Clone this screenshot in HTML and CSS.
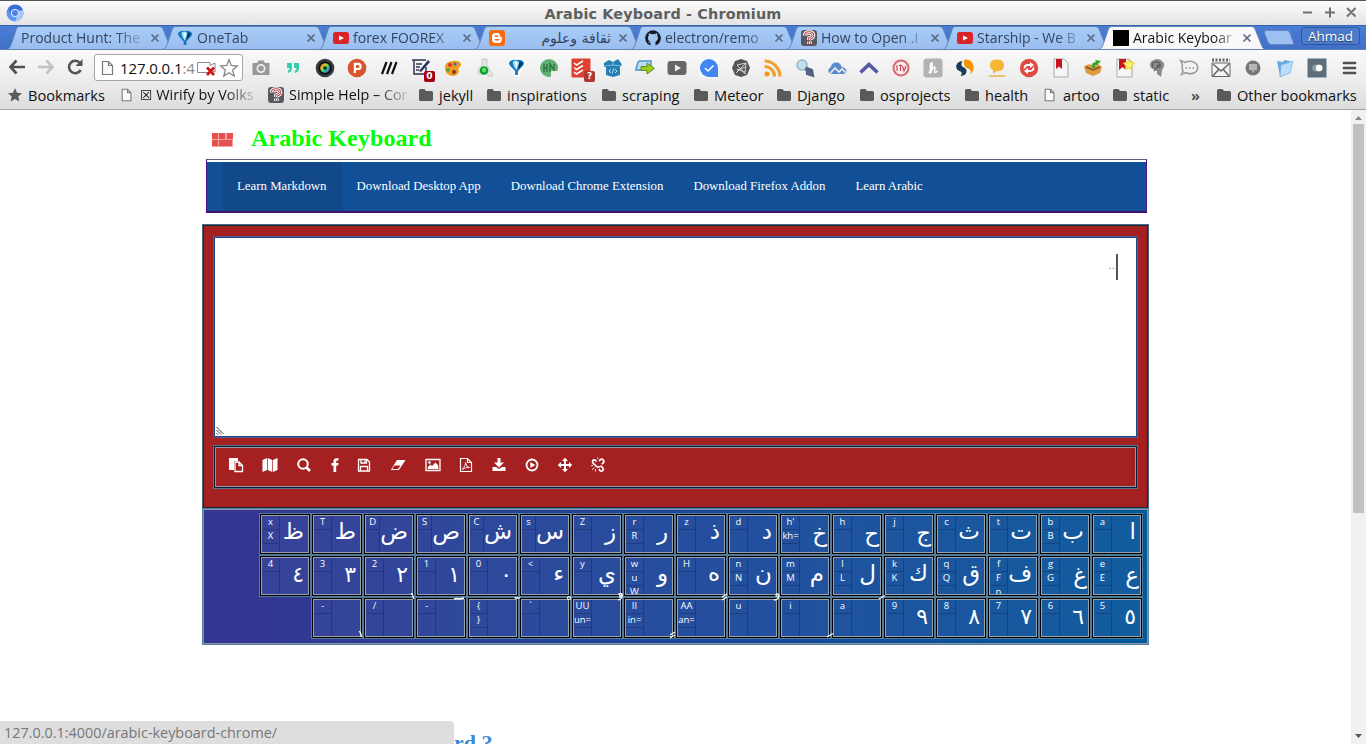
FILE: index.html
```html
<!DOCTYPE html>
<html lang="en">
<head>
<meta charset="utf-8">
<title>Arabic Keyboard</title>
<link rel="stylesheet" href="styles.css">
</head>
<body>
<svg width="0" height="0" class="defs">
  <defs>
    <linearGradient id="tabfill" x1="0" y1="0" x2="0" y2="1"><stop offset="0" stop-color="#a8cdf8"/><stop offset="1" stop-color="#9abdf0"/></linearGradient>
    <linearGradient id="hue" x1="0" y1="0" x2="1" y2="1"><stop offset="0" stop-color="#f33"/><stop offset=".35" stop-color="#cc2"/><stop offset=".6" stop-color="#2c8"/><stop offset="1" stop-color="#83f"/></linearGradient>
    <symbol id="tab" viewBox="0 0 170 25"><path d="M0 24.5C4 24 4.500 21 6 17L10 5C11 2 12 1.500 15 1.500H152C156 1.500 156.500 3 157.500 5L163 19C164.500 23 165 24 169 24.500Z" stroke="#6484b8" stroke-width="1"/></symbol>
    <symbol id="folder" viewBox="0 0 14 14"><path d="M0 2.500Q0 1 1.500 1H5.500L7 3H12.500Q14 3 14 4.500V11.500Q14 13 12.500 13H1.500Q0 13 0 11.500Z" fill="#5a5a5a"/></symbol>
    <symbol id="page" viewBox="0 0 14 16"><path d="M1.500 1.500H7.500L11.500 5.500V14.500H1.500ZM7.500 1.500V5.500H11.500" fill="#fbfbfb" stroke="#777" stroke-width="1.200"/></symbol>
    <symbol id="x" viewBox="0 0 10 10"><path d="M1.500 1.500L8.500 8.500M8.500 1.500L1.500 8.500" stroke="#5d6b80" stroke-width="1.700"/></symbol>
    <symbol id="yt" viewBox="0 0 16 16"><rect y="2" width="16" height="12" rx="2.500" fill="#d9252a"/><path d="M6 5.500L11 8L6 10.500Z" fill="#fff"/></symbol>
    <symbol id="helpicon" viewBox="0 0 16 16"><rect width="16" height="16" rx="3" fill="#555960"/><path d="M4 5.500Q4 2.500 8 2.500Q12 2.500 12 5.500Q12 7.500 8.500 8.500V10M8.500 11.500V14" fill="none" stroke="#fff" stroke-width="4.600"/><path d="M4 5.500Q4 2.500 8 2.500Q12 2.500 12 5.500Q12 7.500 8.500 8.500V10M8.500 11.500V14" fill="none" stroke="#b33a44" stroke-width="2.600"/><path d="M4 5.500Q4 2.500 8 2.500Q12 2.500 12 5.500Q12 7.500 8.500 8.500V10M8.500 11.500V14" fill="none" stroke="#fff" stroke-width=".9"/></symbol>
    <symbol id="balloon" viewBox="0 0 18 18"><path d="M1 4Q3 0 9 1Q15 0 17 4Q17 7 13 10L10.500 13V17H7.500V13L5 10Q1 7 1 4Z" fill="#1677c0"/><path d="M5 3Q9 0 12 4L9 12Q5 7 5 3Z" fill="#8ee4fa"/><path d="M7 3L9 11L10 3Z" fill="#fff"/><path d="M12 3Q16 2 15 6L10.500 11Z" fill="#07355e"/></symbol>
  </defs>
</svg>

<header class="titlebar">
  <svg class="logo" viewBox="0 0 18 18"><circle cx="9" cy="9" r="8.500" fill="#5f95ee"/><path d="M9 9L17 6A8.500 8.500 0 0 1 9 17.500L12 10Z" fill="#a9c8fa"/><path d="M2 4.500A8.500 8.500 0 0 1 17 6H9L5 10Z" fill="#3b6fd6"/><circle cx="9" cy="9" r="4" fill="#dce9ff"/><circle cx="9" cy="9" r="3" fill="#4b82e6"/></svg>
  <h1>Arabic Keyboard - Chromium</h1>
  <svg class="winbtns" viewBox="0 0 56 14"><path d="M1 6.500H10M23 6.500H33M28 1.500V11.500M45 2L53.500 10.500M53.500 2L45 10.500" stroke="#707070" stroke-width="2" fill="none"/></svg>
</header>

<div class="tabstrip">
  <div class="tab"><svg class="shape"><use href="#tab"/></svg><span class="label">Product Hunt: The</span><svg class="close"><use href="#x"/></svg></div>
  <div class="tab"><svg class="shape"><use href="#tab"/></svg><svg class="fav"><use href="#balloon"/></svg><span class="label">OneTab</span><svg class="close"><use href="#x"/></svg></div>
  <div class="tab"><svg class="shape"><use href="#tab"/></svg><svg class="fav"><use href="#yt"/></svg><span class="label">forex FOOREX</span><svg class="close"><use href="#x"/></svg></div>
  <div class="tab"><svg class="shape"><use href="#tab"/></svg><svg class="fav" viewBox="0 0 16 16"><rect width="16" height="16" rx="3" fill="#fb6a0c"/><path d="M6.500 3H8.500Q11.200 3 11.200 6.500Q13 6.700 13 8.500Q13 13 9 13H6.500Q3 13 3 9V6.500Q3 3 6.500 3Z" fill="#fff"/><path d="M6.300 6.200H8.500M6.300 9.700H9.700" stroke="#fb6a0c" stroke-width="1.500" stroke-linecap="round"/></svg><span class="label rtl">ثقافة وعلوم</span><svg class="close"><use href="#x"/></svg></div>
  <div class="tab"><svg class="shape"><use href="#tab"/></svg><svg class="fav" viewBox="0 0 16 16"><path d="M8 .3A7.800 7.800 0 0 0 5.500 15.500V12.800Q3.500 13 2.800 11.300Q4.500 12.300 5.500 11.500Q3 11 3 8Q3 6.500 3.800 5.500Q3.500 4 4 3.200Q5 3.300 6 4.200Q8 3.700 10 4.200Q11 3.300 12 3.200Q12.500 4 12.200 5.500Q13 6.500 13 8Q13 11 10.500 11.700V15.500A7.800 7.800 0 0 0 8 .3Z" fill="#161b24"/></svg><span class="label">electron/remo</span><svg class="close"><use href="#x"/></svg></div>
  <div class="tab"><svg class="shape"><use href="#tab"/></svg><svg class="fav"><use href="#helpicon"/></svg><span class="label">How to Open .I</span><svg class="close"><use href="#x"/></svg></div>
  <div class="tab"><svg class="shape"><use href="#tab"/></svg><svg class="fav"><use href="#yt"/></svg><span class="label">Starship - We B</span><svg class="close"><use href="#x"/></svg></div>
  <div class="tab active"><svg class="shape"><use href="#tab"/></svg><svg class="fav" viewBox="0 0 16 16"><path d="M0 0H16V16H0Z"/></svg><span class="label">Arabic Keyboar</span><svg class="close"><use href="#x"/></svg></div>
  <svg class="newtab" viewBox="0 0 34 18"><path d="M4.500 1.500H25Q27 1.500 28 4L31.500 14Q32 15.500 30 15.500H10Q7 15.500 6 13L2.500 4Q2 1.500 4.500 1.500Z" fill="#9dbff1" stroke="#6585bd"/></svg>
  <span class="user">Ahmad</span>
</div>

<div class="toolbar">
  <div class="navbtns">
    <svg viewBox="0 0 20 20"><path d="M18 10H4M9.500 3.500L3.500 10L9.500 16.500" fill="none" stroke="#505050" stroke-width="2.600"/></svg>
    <svg viewBox="0 0 20 20"><path d="M2 10H16M10.500 3.500L16.500 10L10.500 16.500" fill="none" stroke="#c2c2c2" stroke-width="2.600"/></svg>
    <svg viewBox="0 0 20 20"><path d="M15 6A6.200 6.200 0 1 0 15.700 13" fill="none" stroke="#555" stroke-width="2.600"/><path d="M17.500 2V9H10.500Z" fill="#555"/></svg>
  </div>
  <div class="omnibox">
    <svg class="doc"><use href="#page"/></svg>
    <span class="url">127.0.0.1<i>:4</i></span>
    <svg class="blocked" viewBox="0 0 20 18"><path d="M.5 2.500H13V5.500L18 3V12L13 9.500V12.500H.5Z" fill="#fff" stroke="#888"/><path d="M10 7.500L17 15M17 7.500L10 15" stroke="#d4141c" stroke-width="2.600"/></svg>
    <svg class="star" viewBox="0 0 20 20"><path d="M10 1.800L12.300 7.500L18.300 8L13.700 12L15.200 18L10 14.700L4.800 18L6.300 12L1.700 8L7.700 7.500Z" fill="#fff" stroke="#888" stroke-width="1.300"/></svg>
  </div>
  <div class="extensions">
    <svg viewBox="0 0 20 20"><path d="M2 5H6L7.500 2.500H12.500L14 5H18.500V17H1.500V5Z" fill="#999"/><circle cx="10" cy="10.500" r="4.500" fill="#eee"/><circle cx="10" cy="10.500" r="2.800" fill="#999"/></svg>
    <svg viewBox="0 0 20 20"><path d="M4 5H9V10Q9 14 5 15V12.500Q6.500 12 6.500 10H4ZM11 5H16V10Q16 14 12 15V12.500Q13.500 12 13.500 10H11Z" fill="#31cfb0"/></svg>
    <svg viewBox="0 0 20 20"><circle cx="10" cy="10" r="9.300" fill="#3a3b40"/><circle cx="10" cy="10" r="6.800" fill="#111"/><circle cx="10" cy="10" r="4.800" fill="url(#hue)"/><circle cx="10" cy="10" r="1.800" fill="#123"/></svg>
    <svg viewBox="0 0 20 20"><circle cx="10" cy="10" r="9.300" fill="#da552f"/><path d="M7.900 15V5.800H11A2.600 2.600 0 0 1 11 11H8" fill="none" stroke="#fff" stroke-width="2.200"/></svg>
    <svg viewBox="0 0 20 20"><path d="M3 16L7.500 4M8 16L12.500 4M13 16L17.500 4" stroke="#111" stroke-width="2.200"/></svg>
    <span class="ext"><svg viewBox="0 0 20 20"><path d="M1 2H15M3 2V16H15V9M5 6H11M5 9H9M5 12H8" fill="none" stroke="#33334e" stroke-width="1.500"/><path d="M8 13L17 2L19 4L10 14Z" fill="#263064"/></svg><b class="badge red">0</b></span>
    <svg viewBox="0 0 20 20"><path d="M2 11Q1 4 9 3Q19 2 18 8Q14 9 16 13Q15 18 9 18Q3 17 2 11Z" fill="#ee9c1e"/><circle cx="7" cy="7" r="2" fill="#d33"/><circle cx="12" cy="6" r="1.600" fill="#36c"/><circle cx="5" cy="12" r="1.800" fill="#3a5"/><circle cx="11" cy="14" r="2" fill="#832"/></svg>
    <svg viewBox="0 0 20 20"><path d="M7 1H12V7L18 18H13L11 14Q8 18 4 16Q1 12 7 7Z" fill="#e1e8e1" stroke="#b8bfb8" stroke-width=".7"/><circle cx="9" cy="12.500" r="4.300" fill="#179b35"/><circle cx="9" cy="12" r="2.200" fill="#5be35a"/></svg>
    <svg viewBox="0 0 20 20"><path d="M0 4Q3 0 10 1Q17 0 20 4L13 15V19H7V15Z" fill="#fff"/><use href="#balloon" x="1" y="1" width="17" height="17"/></svg>
    <svg viewBox="0 0 20 20"><circle cx="10" cy="10" r="9" fill="#5fb073"/><path d="M5 6V14M8 6V14M5 10H8M11 14V6L15 12V6" stroke="#2e7442" stroke-width="1.300" fill="none"/><path d="M12 13H20V20H12Z" fill="#efefef"/></svg>
    <span class="ext"><svg viewBox="0 0 20 20"><rect x=".5" y=".5" width="19" height="19" rx="1" fill="#e04032"/><path d="M3 5L5.500 7L12 3M3 9.500L5.500 11.500L12 7.500M3 14L5.500 16L12 12" fill="none" stroke="#fff" stroke-width="1.500"/></svg><b class="badge dim">?</b></span>
    <svg viewBox="0 0 20 20"><path d="M1 5L6 2L10 4L15 1L18 5L19 8H17V17L10 19L3 17V9H1Z" fill="#2580b5"/><path d="M1 8L10 7L19 8M10 4V8" stroke="#8cc6e8" fill="none" stroke-width=".8"/><path d="M8 11L6 13L8 15M12 11L14 13L12 15M10.800 10.500L9.300 15.500" stroke="#bfe2f5" fill="none" stroke-width=".9"/></svg>
    <svg viewBox="0 0 20 20"><path d="M4 3H16V9H8V12H1Q2 5 4 3Z" fill="#b9dcf4" stroke="#4c93cc" stroke-width="1.500"/><path d="M6 8.500H12V5L19.500 10.500L12 16V12.500H6Z" fill="#98cd1a" stroke="#658b1c"/></svg>
    <svg viewBox="0 0 20 20"><rect x=".5" y="3" width="19" height="14" rx="3" fill="#666"/><path d="M8 6.500L14 10L8 13.500Z" fill="#eee"/></svg>
    <svg viewBox="0 0 20 20"><path d="M.5 .5H19.500V19.500H.5Z" fill="#f7faff"/><path d="M10 1A9 9 0 1 0 10 19H19V10A9 9 0 0 0 10 1Z" fill="#4285f4"/><path d="M6 10L9 13L14.500 7.500" fill="none" stroke="#fff" stroke-width="1.500"/></svg>
    <svg viewBox="0 0 20 20"><path d="M4 3L10 1L16 3L19 10L16 17L10 19L4 17L1 10Z" fill="#555"/><path d="M5 15L15 5L14 16L6 7L15 5M6 11L14 14M6 13L14 9" fill="none" stroke="#ddd" stroke-width=".9"/></svg>
    <svg viewBox="0 0 20 20"><circle cx="4" cy="16" r="2.500" fill="#f2961d"/><path d="M1.500 8.500A10 10 0 0 1 11.500 18.500M1.500 3A15.500 15.500 0 0 1 17 18.500" fill="none" stroke="#f0a030" stroke-width="3.200"/></svg>
    <svg viewBox="0 0 20 20"><circle cx="7" cy="7" r="5" fill="#bfe0f4" stroke="#9db5c5" stroke-width="1.500"/><path d="M10 11L18 18M12 10L17 12L18 18L12 16Z" stroke="#526280" stroke-width="2.200" fill="#526280"/></svg>
    <svg viewBox="0 0 20 20"><path d="M3.500 16A3.500 3.500 0 0 1 3.500 9.500Q5 4 10 4.500Q14 5 14.500 9Q19 9.500 19.500 13Q19 16 16 16Z" fill="#5a8bd0"/><path d="M3 15.500L8 10L12 14L15 11L18.500 14.500" stroke="#eee" stroke-width="1.600" fill="none"/></svg>
    <svg viewBox="0 0 20 20"><path d="M1.500 14.500L10 6.500L18.500 14.500" fill="none" stroke="#5358a5" stroke-width="3.600"/></svg>
    <svg viewBox="0 0 20 20"><path d="M.5 .5H19.500V19.500H.5Z" fill="#fbecec"/><circle cx="10" cy="10" r="7.500" fill="none" stroke="#cc6c74" stroke-width="2"/><path d="M6 7V13M8 7.500H11M9.500 6.500V13M11.500 8L13 13L15 8" fill="none" stroke="#d04050" stroke-width="1.100"/></svg>
    <svg viewBox="0 0 20 20"><rect x=".5" y=".5" width="19" height="19" rx="3" fill="#b2b2b2"/><path d="M6 15Q10 8 9 5Q7 4 7.500 9V15.500Q9 9 11.500 9Q12.500 9 11.500 13Q11.500 16 14.500 13" fill="none" stroke="#fff" stroke-width="1.500"/></svg>
    <svg viewBox="0 0 20 20"><path d="M7.500 3Q2 3.500 1.200 8Q.8 12 5.500 13.500Q8 15 5.500 18Q11.500 17.500 11.500 13Q11.500 10.500 8 9Q5 7 7.500 3Z" fill="#193b5b"/><path d="M9.500 1.500Q16 1 18 6Q20 12 15 17Q17 13 14 11Q9 9 9 6Q8.500 3.500 9.500 1.500Z" fill="#f99500"/></svg>
    <svg viewBox="0 0 20 20"><path d="M3 7Q3 1.500 10 1.500Q17 1.500 17 7.500Q17 13 10.500 13L6 15.500V12Q3 11 3 7Z" fill="#f4b734"/><path d="M2 18H18" stroke="#e7b33d" stroke-width="1.500"/></svg>
    <svg viewBox="0 0 20 20"><circle cx="10" cy="10" r="9.200" fill="#dd4b43"/><path d="M5.500 10.500Q5.500 7 9 7H12M14.500 9.500Q14.500 13 11 13H8" fill="none" stroke="#fff" stroke-width="1.800"/><path d="M11 4L15 7L11 10ZM9 16L5 13L9 10Z" fill="#fff"/></svg>
    <svg viewBox="0 0 20 20"><path d="M3 1H13L17 5V19H3Z" fill="#f5f5f5" stroke="#aaa"/><path d="M5 1H11V11L8 8.500L5 11Z" fill="#c9121f"/></svg>
    <svg viewBox="0 0 20 20"><path d="M1 8L7 6L10 8L15 6L19 9L17 15L10 18L3 15Z" fill="#dd9a40"/><path d="M3 9L10 12L17 9" fill="none" stroke="#8c501e" stroke-width="1.500"/><path d="M9 10Q8 4 13 4L12 2L18 3L14 7Q11 6 12 10Z" fill="#36a52a"/></svg>
    <svg viewBox="0 0 20 20"><path d="M2 1H14L17 4V19H2Z" fill="#f5f5f5" stroke="#aaa"/><path d="M4 1H11V12L7.500 9L4 12Z" fill="#c9121f"/><path d="M14 1L15.500 4.500L19.500 5L16.500 8L17 11.500L14 9.800L10.500 11.500L11 8L8.500 5L12.500 4.500Z" fill="#fff36b" stroke="#e5d02b"/></svg>
    <svg viewBox="0 0 20 20"><path d="M4 10Q1 4 7 2Q12 -1 16 4Q19 7 15 12L14 19L10 16V13Z" fill="#8a8a8a"/><path d="M6 10Q4 4 9 4Q14 4 13 9Q10 10 10 7M7 13L13 6" fill="none" stroke="#606060" stroke-width="1.300"/></svg>
    <svg viewBox="0 0 20 20"><path d="M1.500 2.500L6 4.500Q13 1.500 17.500 6Q20.500 11 16 14.500Q11 17 6.500 14.500L2.500 16.500L4 12.500Q2.500 10 3.500 7Z" fill="#f2f2f2" stroke="#999" stroke-width="1.500"/><path d="M6.500 10H8M10 10H11.500M13.500 10H15" stroke="#888" stroke-width="1.700"/></svg>
    <svg viewBox="0 0 20 20"><path d="M1 5H19V18.500H1Z" fill="#f5f5f5" stroke="#666"/><path d="M1 2H19" stroke="#666" stroke-width="3" stroke-dasharray="2 1.500"/><path d="M2 6L10 13L18 6M2 18L8 11M18 18L12 11" fill="none" stroke="#666" stroke-width="1.500"/></svg>
    <svg viewBox="0 0 20 20"><circle cx="10" cy="10" r="7.500" fill="#777"/><path d="M6 6H14V12H12L9 15V12H6Z" fill="#b7b7b7"/></svg>
    <svg viewBox="0 0 20 20"><path d="M2 3L8 4L9 2L15 3L14 15L5 18Z" fill="#67a9e5"/><path d="M6 7L18 3L15 15L5 19Z" fill="#b9dcfa" stroke="#78acd9" stroke-width=".7"/></svg>
    <svg viewBox="0 0 20 20"><path d="M.5 .5H19.500V19.500H.5Z" fill="#5d6e7b"/><rect x="5" y="6.500" width="11" height="7" rx="3.500" fill="#8b979f"/><circle cx="12" cy="10" r="3.300" fill="#fff"/></svg>
    <svg viewBox="0 0 20 20"><path d="M5 5H16M5 10H16M5 15H16" stroke="#505050" stroke-width="2.700" stroke-linecap="round"/></svg>
  </div>
</div>

<nav class="bookmarks">
  <a><svg viewBox="0 0 14 14"><path d="M7 0L9 4.700L14 5.200L10.300 8.600L11.400 13.600L7 11L2.600 13.600L3.700 8.600L0 5.200L5 4.700Z" fill="#5a5a5a"/></svg><span>Bookmarks</span></a>
  <a><svg><use href="#page"/></svg><span class="fade first"><em>☒</em> Wirify by Volks</span></a>
  <a><svg class="big"><use href="#helpicon"/></svg><span class="fade second">Simple Help – Cor</span></a>
  <a><svg><use href="#folder"/></svg><span>jekyll</span></a>
  <a><svg><use href="#folder"/></svg><span>inspirations</span></a>
  <a><svg><use href="#folder"/></svg><span>scraping</span></a>
  <a><svg><use href="#folder"/></svg><span>Meteor</span></a>
  <a><svg><use href="#folder"/></svg><span>Django</span></a>
  <a><svg><use href="#folder"/></svg><span>osprojects</span></a>
  <a><svg><use href="#folder"/></svg><span>health</span></a>
  <a><svg><use href="#page"/></svg><span>artoo</span></a>
  <a><svg><use href="#folder"/></svg><span>static</span></a>
  <a class="more">»</a>
  <a><svg><use href="#folder"/></svg><span>Other bookmarks</span></a>
</nav>

<div class="viewport">
  <main class="content">
    <div class="brand">
      <svg viewBox="0 0 21 14"><path d="M0 0H21V14H0Z" fill="#f8a39b"/><path d="M0 0H6V6H0ZM7 0H13V6H7ZM15 0H21V6H15ZM0 7H6V13H0ZM7 7H20V13H7Z" fill="#e65050"/></svg>
      <h2>Arabic Keyboard</h2>
    </div>
    <nav class="menu">
      <a class="current">Learn Markdown</a><a>Download Desktop App</a><a>Download Chrome Extension</a><a>Download Firefox Addon</a><a>Learn Arabic</a>
    </nav>
    <section class="editor">
      <div class="paper"><span class="hint">...</span><span class="caret"></span>
        <svg class="grip" viewBox="0 0 8 8"><path d="M.5 0L7.500 7M.5 3L5 7.500M.5 6L2 7.500" stroke="#444" stroke-width="1"/></svg>
      </div>
      <div class="tools">
        <svg viewBox="0 0 16 16"><path d="M1 1H10V4H6V13H1Z" fill="#fff"/><path d="M7 5H11L14.500 8.500V14.500H7ZM11 5V8.500H14.500" fill="none" stroke="#fff" stroke-width="1.300"/></svg>
        <svg viewBox="0 0 16 16"><path d="M.5 3L5 1V13L.5 15ZM5.700 1L10.300 3V15L5.700 13ZM11 3L15.500 1V13L11 15Z" fill="#fff"/></svg>
        <svg viewBox="0 0 16 16"><circle cx="7" cy="7" r="4.800" fill="none" stroke="#fff" stroke-width="2"/><path d="M10.500 10.500L14 14" stroke="#fff" stroke-width="2.600"/></svg>
        <svg viewBox="0 0 16 16"><path d="M11.500 1.200H9.500Q6.500 1.200 6.500 4V6H4.500V8.500H6.500V15H9.200V8.500H11.200L11.500 6H9.200V4.700Q9.200 3.500 10.300 3.500H11.500Z" fill="#fff"/></svg>
        <svg viewBox="0 0 16 16"><path d="M2.500 2.500H11L13.500 5V14H2.500ZM5 2.500V6H10.500V2.500M4.500 14V9.500H11.500V14" fill="none" stroke="#fff" stroke-width="1.300"/><path d="M8.300 3H9.500V5.500H8.300Z" fill="#fff"/></svg>
        <svg viewBox="0 0 16 16"><path d="M7 3H15.500L9 13H.8Z" fill="#fff"/><path d="M4.500 8.500H10.500L8.200 12H2.200Z" fill="#a52021"/></svg>
        <svg viewBox="0 0 16 16"><path d="M1 2.500H15V13.500H1Z" fill="none" stroke="#fff" stroke-width="1.300"/><path d="M2.800 12V10L5.500 7.500L7 9L10.500 5.500L13.300 8.500V12Z" fill="#fff"/><circle cx="4.500" cy="5.500" r="1.300" fill="#fff"/></svg>
        <svg viewBox="0 0 16 16"><path d="M2.500 1.500H9.500L13.500 5.500V14.500H2.500ZM9.500 1.500V5.500H13.500" fill="none" stroke="#fff" stroke-width="1.200"/><path d="M4.500 12.500Q8 8 7.500 5.500Q8 10 11.500 10.500Q7 10 4.500 12.500" fill="none" stroke="#fff" stroke-width=".9"/></svg>
        <svg viewBox="0 0 16 16"><path d="M6.500 1H9.500V5.500H13L8 10.500L3 5.500H6.500Z" fill="#fff"/><path d="M1.500 10H5L8 12L11 10H14.500V14H1.500Z" fill="#fff"/></svg>
        <svg viewBox="0 0 16 16"><circle cx="8" cy="8" r="5.500" fill="none" stroke="#fff" stroke-width="1.800"/><path d="M6.300 5L11.300 8L6.300 11Z" fill="#fff"/></svg>
        <svg viewBox="0 0 16 16"><path d="M8 2V14M2 8H14" stroke="#fff" stroke-width="2"/><path d="M8 .8L11 4H5ZM8 15.200L11 12H5ZM.8 8L4 5V11ZM15.200 8L12 5V11Z" fill="#fff"/></svg>
        <svg viewBox="0 0 16 16"><path d="M9 4L10.200 2.800Q12 1.500 13.300 3Q14.600 4.600 13 6.200L11.800 7.200M6.500 4.500L5.300 3.200Q3.700 2.200 2.700 3.700Q2 5 3.200 6.300L7 9.800Q8.500 10.600 9.700 9.300M10.500 8.700L12.800 11Q14 12.300 12.700 13.600Q11.300 14.700 9.800 13.300L8.700 12.200" fill="none" stroke="#fff" stroke-width="1.700"/><path d="M7.800 .5V2M1 8.700H3M2 12.700L4.500 10.700M5.500 12V14.500" stroke="#fff" stroke-width=".9"/></svg>
      </div>
    </section>
    <section class="keys">
      <div class="key"><ul><li>a</li></ul><b>ا</b></div>
      <div class="key"><ul><li>b</li><li>B</li></ul><b>ب</b></div>
      <div class="key"><ul><li>t</li></ul><b>ت</b></div>
      <div class="key"><ul><li>c</li></ul><b>ث</b></div>
      <div class="key"><ul><li>j</li></ul><b class="deep">ج</b></div>
      <div class="key"><ul><li>h</li></ul><b class="deep">ح</b></div>
      <div class="key"><ul><li>h'</li><li>kh=</li></ul><b class="deep">خ</b></div>
      <div class="key"><ul><li>d</li></ul><b>د</b></div>
      <div class="key"><ul><li>z</li></ul><b>ذ</b></div>
      <div class="key"><ul><li>r</li><li>R</li></ul><b>ر</b></div>
      <div class="key"><ul><li>Z</li></ul><b>ز</b></div>
      <div class="key"><ul><li>s</li></ul><b>س</b></div>
      <div class="key"><ul><li>C</li></ul><b>ش</b></div>
      <div class="key"><ul><li>S</li></ul><b>ص</b></div>
      <div class="key"><ul><li>D</li></ul><b>ض</b></div>
      <div class="key"><ul><li>T</li></ul><b>ط</b></div>
      <div class="key"><ul><li>x</li><li>X</li></ul><b>ظ</b></div>
      <div class="key"><ul><li>e</li><li>E</li></ul><b class="deep">ع</b></div>
      <div class="key"><ul><li>g</li><li>G</li></ul><b class="deep">غ</b></div>
      <div class="key"><ul><li>f</li><li>F</li><li>p</li></ul><b>ف</b></div>
      <div class="key"><ul><li>q</li><li>Q</li></ul><b>ق</b></div>
      <div class="key"><ul><li>k</li><li>K</li></ul><b>ك</b></div>
      <div class="key"><ul><li>l</li><li>L</li></ul><b>ل</b></div>
      <div class="key"><ul><li>m</li><li>M</li></ul><b>م</b></div>
      <div class="key"><ul><li>n</li><li>N</li></ul><b>ن</b></div>
      <div class="key"><ul><li>H</li></ul><b>ه</b></div>
      <div class="key"><ul><li>w</li><li>u</li><li>W</li></ul><b>و</b></div>
      <div class="key"><ul><li>y</li></ul><b>ي</b></div>
      <div class="key"><ul><li>&lt;</li></ul><b>ء</b></div>
      <div class="key"><ul><li>0</li></ul><b class="num">٠</b></div>
      <div class="key"><ul><li>1</li></ul><b class="num">١</b></div>
      <div class="key"><ul><li>2</li></ul><b class="num">٢</b></div>
      <div class="key"><ul><li>3</li></ul><b class="num">٣</b></div>
      <div class="key"><ul><li>4</li></ul><b class="num">٤</b></div>
      <div class="key"><ul><li>5</li></ul><b class="num">٥</b></div>
      <div class="key"><ul><li>6</li></ul><b class="num">٦</b></div>
      <div class="key"><ul><li>7</li></ul><b class="num">٧</b></div>
      <div class="key"><ul><li>8</li></ul><b class="num">٨</b></div>
      <div class="key"><ul><li>9</li></ul><b class="num">٩</b></div>
      <div class="key"><ul><li>a</li></ul><svg class="mark" viewBox="0 0 12 8"><path d="M1 6L7 2.500" stroke="#fff" stroke-width="1.400"/></svg></div>
      <div class="key"><ul><li>i</li></ul><svg class="mark low" viewBox="0 0 12 8"><path d="M1 6L7 2.500" stroke="#fff" stroke-width="1.400"/></svg></div>
      <div class="key"><ul><li>u</li></ul><svg class="mark" viewBox="0 0 12 8"><path d="M0 7Q5 7 5 2Q3 0 2 2Q2 4 5 3" fill="none" stroke="#fff" stroke-width="1.300"/></svg></div>
      <div class="key"><ul><li>AA</li><li>an=</li></ul><svg class="mark" viewBox="0 0 12 8"><path d="M0 4L5 1M0 7L5 4" stroke="#fff" stroke-width="1.300"/></svg></div>
      <div class="key"><ul><li>II</li><li>in=</li></ul><svg class="mark low" viewBox="0 0 12 8"><path d="M0 4L5 1M0 7L5 4" stroke="#fff" stroke-width="1.300"/></svg></div>
      <div class="key"><ul><li>UU</li><li>un=</li></ul><svg class="mark" viewBox="0 0 12 8"><path d="M0 7Q5 6 4 1Q2 -1 1 1Q1 3 4 2M1 4L4 4" fill="none" stroke="#fff" stroke-width="1.300"/></svg></div>
      <div class="key"><ul><li>`</li></ul><svg class="mark" viewBox="0 0 12 8"><circle cx="3" cy="5" r="1.500" fill="none" stroke="#fff" stroke-width="1.200"/></svg></div>
      <div class="key"><ul><li>{</li><li>}</li></ul><svg class="mark" viewBox="0 0 12 8"><path d="M1 4Q1 6 3 5V4Q4 7 6 4" fill="none" stroke="#fff" stroke-width="1.200"/></svg></div>
      <div class="key"><ul><li>-</li></ul><svg class="mark madda" viewBox="0 0 12 8"><path d="M1 6Q3 5 6 6L11 5" fill="none" stroke="#fff" stroke-width="1.500"/></svg></div>
      <div class="key"><ul><li>/</li></ul><svg class="mark" viewBox="0 0 12 8"><path d="M1 0Q3 1 3.500 6" fill="none" stroke="#fff" stroke-width="1.400"/></svg></div>
      <div class="key"><ul><li>-</li></ul><svg class="mark low" viewBox="0 0 12 8"><path d="M1 0Q3 1 3.500 6" fill="none" stroke="#fff" stroke-width="1.400"/></svg></div>
    </section>
    <h3 class="question">rd ?</h3>
  </main>
  <div class="scrollbar"><svg viewBox="0 0 7 4"><path d="M3.500 0L7 4H0Z" fill="#888"/></svg><div class="thumb"></div><svg class="down" viewBox="0 0 7 4"><path d="M0 0H7L3.500 4Z" fill="#555"/></svg></div>
  <div class="status">127.0.0.1:4000/arabic-keyboard-chrome/</div>
</div>
</body>
</html>
```
FILE: styles.css
```css
* { box-sizing: border-box; }
body { margin: 0; width: 1366px; height: 744px; overflow: hidden; background: #fff; font-family: "Open Sans", "Noto Sans", "DejaVu Sans", sans-serif; }
.defs { position: absolute; }
svg { display: block; flex: none; }

/* Window title */
.titlebar { height: 25px; border-top: 1px solid #555; background: linear-gradient(#fdfdfd, #e3e3e3); display: flex; align-items: center; justify-content: space-between; padding: 0 9px 0 6px; }
.titlebar h1 { margin: 1px 0 0; font: bold 14.400px/24px "DejaVu Sans", sans-serif; color: #5f5f5f; letter-spacing: .150px; }
.logo { width: 18px; height: 18px; }
.winbtns { width: 56px; height: 14px; margin-right: -1px; }

/* Tabs */
.tabstrip { height: 25px; padding-left: 11px; display: flex; background: linear-gradient(#4a7dd4, #4070c6); border-top: 1px solid #3562ae; box-shadow: inset 0 -1px #5c81bd; }
.tab { position: relative; width: 156px; flex: none; display: flex; align-items: center; padding: 0 7px 0 10px; color: #34445c; font-size: 14px; }
.tab .shape { position: absolute; left: -5px; top: -1px; width: 170px; height: 25px; fill: url(#tabfill); }
.tab.active .shape { fill: #f9f9f9; }
.tab.active { color: #111; z-index: 2; }
.fav { position: relative; width: 16px; height: 16px; margin-right: 4px; }
.label { position: relative; flex: 1; overflow: hidden; white-space: nowrap; line-height: 22px; -webkit-mask-image: linear-gradient(90deg, #000 75%, transparent); mask-image: linear-gradient(90deg, #000 75%, transparent); margin-right: 2px; }
.label.rtl { direction: rtl; font: 14px/22px "DejaVu Sans", sans-serif; -webkit-mask-image: none; mask-image: none; margin-right: 7px; }
.close { position: relative; width: 10px; height: 10px; }
.newtab { width: 34px; height: 18px; margin: 3px 0 0 3px; }
.user { margin: 1px 6px 0 auto; width: 59px; height: 18px; border: 1px solid #2d56a2; border-radius: 3px; color: #fff; font-size: 13.500px; line-height: 17px; text-align: center; background: #4d7bcb; text-shadow: 0 1px 1px #234; }

/* Address bar and extension buttons */
.toolbar { height: 34px; display: flex; align-items: center; padding-left: 7px; background: linear-gradient(#f9f9f9, #ebebeb); }
.navbtns { display: flex; gap: 9px; width: 87px; }
.navbtns svg { width: 20px; height: 20px; }
.omnibox { width: 149px; height: 27px; margin-top: 1px; border: 1px solid #a5a5a5; border-radius: 3px; background: #fff; display: flex; align-items: center; padding-left: 6px; }
.doc { width: 14px; height: 16px; margin-right: 5px; }
.url { width: 77px; overflow: hidden; font-size: 15px; line-height: 22px; letter-spacing: -.100px; white-space: nowrap; color: #111; }
.url i { font-style: normal; color: #888; }
.blocked { width: 20px; height: 18px; margin-top: 2px; }
.star { width: 20px; height: 20px; margin-left: 2px; }
.extensions { display: flex; margin: 1px 0 0 2px; }
.extensions > svg, .ext { width: 20px; height: 20px; margin: 0 6px; flex: none; }
.ext { position: relative; }
.badge { position: absolute; right: -4px; bottom: -4px; width: 11px; height: 11px; border-radius: 2px; color: #fff; font: bold 9px/11px "DejaVu Sans", sans-serif; text-align: center; }
.badge.red { background: #a40013; }
.badge.dim { background: #ad3732; }

/* Bookmarks */
.bookmarks { height: 26px; padding: 0 0 3px 8px; display: grid; grid-template-columns: 112px 148px 151px 68px 115px 92px 83px 83px 105px 78px 70px 78px 26px 149px; align-items: center; font-size: 14.600px; color: #111; background: linear-gradient(#ebebeb, #dcdcdc); border-bottom: 1px solid #a5a5a5; }
.bookmarks a { display: flex; align-items: center; gap: 6px; white-space: nowrap; line-height: 22px; }
.bookmarks a svg { width: 14px; height: 14px; }
.bookmarks a svg.big { width: 16px; height: 16px; margin-right: -1px; }
.fade { overflow: hidden; -webkit-mask-image: linear-gradient(90deg, #000 70%, transparent); mask-image: linear-gradient(90deg, #000 70%, transparent); }
.fade em { font: 14px "DejaVu Sans", sans-serif; }
.first { width: 120px; font-size: 14.400px; }
.second { width: 124px; font-size: 14.400px; }
.bookmarks .more { color: #555; font-weight: bold; }

/* Page */
.viewport { position: relative; height: 634px; display: flex; justify-content: space-between; overflow: hidden; }
.content { width: 947px; margin-left: 202px; }
.brand { height: 49px; display: flex; padding: 23px 0 0 10px; gap: 18px; }
.brand svg { width: 21px; height: 14px; }
.brand h2 { margin: -11px 0 0; font: bold 24px/32px "Liberation Serif", serif; color: #0f0; letter-spacing: .100px; white-space: nowrap; }
.menu { margin: 0 2px 0 4px; height: 54px; padding: 0 15px; display: flex; border: 1px solid #4b1290; border-top: 1px solid #5b6079; border-bottom: 2px solid #411173; background: linear-gradient(#fff 2px, #115097 2px); }
.menu a { margin-top: 2px; padding: 0 15px; font: 12.850px/48px "Liberation Serif", serif; color: #fff; white-space: nowrap; }
.menu .current { background: #114989; }
.editor { margin-top: 11px; height: 285px; padding: 11px 10px 10px; border: 1px solid #4b6a80; box-shadow: inset 0 0 0 1px #14253f; background: #a52021; }
.paper { position: relative; height: 202px; border: 1px solid #625695; box-shadow: inset 0 0 0 1px #154a89; background: #fff; }
.hint { position: absolute; right: 19px; top: 22px; font: 10px/14px "DejaVu Sans", sans-serif; color: #888; }
.caret { position: absolute; right: 19px; top: 17px; width: 2px; height: 26px; background: #555; }
.grip { position: absolute; left: 2px; bottom: 2px; width: 8px; height: 8px; }
.tools { margin-top: 7px; height: 44px; border: 1px solid #56758f; box-shadow: inset 0 0 0 1px #091d3b, inset 0 0 0 2px #9298a4; display: grid; grid-template-columns: 34px 34px 31px 29px 34px 35px 33px 33px 33px 33px 33px 34px; padding: 11px 0 0 14px; }
.tools svg { width: 16px; height: 16px; }
.keys { height: 137px; margin-top: -1px; padding: 4px 5px 0 50px; direction: rtl; display: flex; flex-wrap: wrap; align-content: flex-start; border: 1px solid #55809c; box-shadow: inset 0 0 0 1px #8793a6; background: linear-gradient(90deg, #333693 5%, #1c469a 50%, #005a9b); }
.key { position: relative; width: 52px; height: 42px; border: 1px solid #527b99; box-shadow: inset 0 0 0 1px #000, inset 0 0 0 2px #9aa0aa; padding: 2px 3px; display: flex; justify-content: space-between; direction: ltr; background: rgba(70, 100, 170, .26); }
.key ul { list-style: none; margin: 0 0 0 -1px; padding: 0; width: 18px; height: 36px; border-right: 1px solid rgba(10, 20, 60, .3); overflow: hidden; color: #fff; font: 500 9.500px/11px "Open Sans", "Noto Sans", sans-serif; text-align: center; }
.key li { height: 14px; border-bottom: 1px solid rgba(10, 20, 60, .3); display: flex; justify-content: center; }
.key b { font: 23px/31px "DejaVu Sans", sans-serif; color: #fff; margin-right: 3px; }
.key b.deep { line-height: 35px; margin-right: 0; }
.key b.num { font-size: 22px; line-height: 34px; }
.mark { position: absolute; right: -8px; top: -5px; width: 12px; height: 8px; z-index: 2; }
.mark.low { top: 33px; }
.mark.madda { right: 1px; }
.question { margin: 83px 0 0 252px; font: bold 22px/30px "Liberation Serif", serif; color: #3b8ad0; }
.scrollbar { width: 15px; background: #f1f1f1; padding: 6px 2px 0; }
.scrollbar svg { width: 7px; height: 4px; margin: 0 auto 4px; }
.scrollbar svg.down { margin-top: 221px; }
.thumb { width: 11px; height: 389px; background: #c1c1c1; }
.status { position: absolute; left: 0; bottom: 0; width: 454px; height: 23px; padding-left: 4px; border-top-right-radius: 4px; background: #dedede; color: #777; font-size: 14.400px; line-height: 24px; }
```
